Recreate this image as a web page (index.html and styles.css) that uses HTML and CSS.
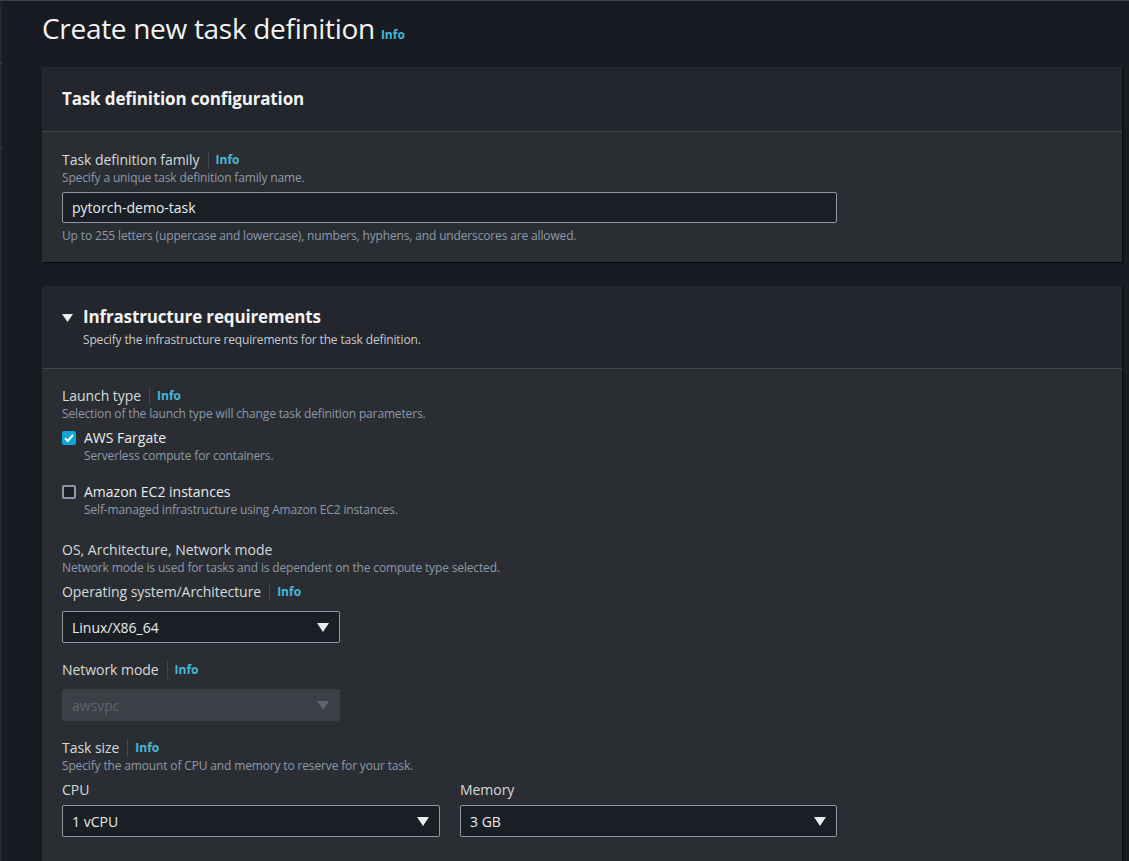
FILE: index.html
```html
<!DOCTYPE html>
<html lang="en">
<head>
<meta charset="utf-8">
<title>Create new task definition</title>
<link rel="stylesheet" href="styles.css">
</head>
<body>
<div class="side-strip"><span class="tick t1"></span><span class="tick t2"></span></div>
<main class="content">
  <h1 class="page-title">Create new task definition <a class="info info-title" href="#">Info</a></h1>

  <section class="panel">
    <header class="panel-header">
      <h2 class="panel-title">Task definition configuration</h2>
    </header>
    <div class="panel-body body-1">
      <div class="label-row"><span class="label">Task definition family</span><span class="sep"></span><a class="info" href="#">Info</a></div>
      <div class="desc">Specify a unique task definition family name.</div>
      <div class="input input-full">pytorch-demo-task</div>
      <div class="desc constraint">Up to 255 letters (uppercase and lowercase), numbers, hyphens, and underscores are allowed.</div>
    </div>
  </section>

  <section class="panel panel-2">
    <header class="panel-header header-2">
      <div class="exp-row">
        <svg class="caret" width="11" height="8" viewBox="0 0 11 8"><path d="M0 0 L11 0 L5.5 8 Z" fill="#eaeded"/></svg>
        <h2 class="panel-title">Infrastructure requirements</h2>
      </div>
      <div class="header-desc">Specify the infrastructure requirements for the task definition.</div>
    </header>
    <div class="panel-body body-2">
      <div class="label-row"><span class="label">Launch type</span><span class="sep"></span><a class="info" href="#">Info</a></div>
      <div class="desc">Selection of the launch type will change task definition parameters.</div>

      <div class="check-item first-check">
        <div class="check-row">
          <span class="box checked"><svg width="14" height="14" viewBox="0 0 14 14"><path d="M3 7.2 L5.8 10 L11 3.8" fill="none" stroke="#fff" stroke-width="2"/></svg></span>
          <span class="check-label">AWS Fargate</span>
        </div>
        <div class="desc indent">Serverless compute for containers.</div>
      </div>

      <div class="check-item second-check">
        <div class="check-row">
          <span class="box"></span>
          <span class="check-label">Amazon EC2 instances</span>
        </div>
        <div class="desc indent">Self-managed infrastructure using Amazon EC2 instances.</div>
      </div>

      <div class="group-title">OS, Architecture, Network mode</div>
      <div class="desc">Network mode is used for tasks and is dependent on the compute type selected.</div>

      <div class="label-row gap-6"><span class="label">Operating system/Architecture</span><span class="sep"></span><a class="info" href="#">Info</a></div>
      <div class="select w-277 mt-9"><span>Linux/X86_64</span><svg class="tri" width="12" height="9" viewBox="0 0 12 9"><path d="M0 0 L12 0 L6 9 Z" fill="#eaeded"/></svg></div>

      <div class="label-row gap-17"><span class="label">Network mode</span><span class="sep"></span><a class="info" href="#">Info</a></div>
      <div class="select disabled w-277 mt-9"><span>awsvpc</span><svg class="tri" width="12" height="9" viewBox="0 0 12 9"><path d="M0 0 L12 0 L6 9 Z" fill="#5f6670"/></svg></div>

      <div class="label-row gap-17"><span class="label">Task size</span><span class="sep"></span><a class="info" href="#">Info</a></div>
      <div class="desc">Specify the amount of CPU and memory to reserve for your task.</div>
      <div class="size-grid">
        <div class="field">
          <div class="label">CPU</div>
          <div class="select mt-5"><span>1 vCPU</span><svg class="tri" width="12" height="9" viewBox="0 0 12 9"><path d="M0 0 L12 0 L6 9 Z" fill="#eaeded"/></svg></div>
        </div>
        <div class="field">
          <div class="label">Memory</div>
          <div class="select mt-5"><span>3 GB</span><svg class="tri" width="12" height="9" viewBox="0 0 12 9"><path d="M0 0 L12 0 L6 9 Z" fill="#eaeded"/></svg></div>
        </div>
      </div>
    </div>
  </section>
</main>
</body>
</html>
```

FILE: styles.css
```css
* { box-sizing: border-box; }
html, body { margin: 0; padding: 0; }
body {
  background: #181b21;
  font-family: "Open Sans", "Noto Sans", sans-serif;
  color: #d5dbdb;
  border-top: 1px solid #3d424a;
  min-height: 861px;
  position: relative;
  overflow: hidden;
}
.side-strip {
  position: absolute;
  left: 0; top: 0; bottom: 0;
  width: 2px;
  background: #23262c;
}
.tick { position: absolute; left: 0; width: 2px; height: 1px; background: #3d424a; }
.t1 { top: 62px; }
.t2 { top: 147px; }

.content {
  padding: 0 7px 0 42px;
}
.page-title {
  margin: 0;
  padding-top: 9px;
  height: 66px;
  font-size: 28px;
  line-height: 36px;
  font-weight: 400;
  color: #f2f3f3;
  letter-spacing: -0.3px;
}
.info {
  color: #44b9d6;
  font-size: 12px;
  font-weight: 700;
  text-decoration: none;
  line-height: 16px;
  letter-spacing: 0;
}
.info-title { margin-left: -1px; }

.panel {
  background: #2a2e33;
  box-shadow: 1px 1px 1px rgba(0,0,0,0.55);
}
.panel-2 { margin-top: 24px; }
.panel-header {
  background: #23262c;
  border-bottom: 1px solid #414750;
  height: 65px;
  padding: 0 20px 1px;
  display: flex;
  align-items: center;
}
.panel-title {
  margin: 0;
  font-size: 17px;
  line-height: 22px;
  font-weight: 700;
  color: #f2f3f3;
  letter-spacing: -0.15px;
}
.header-2 {
  height: 83px;
  display: block;
  padding-top: 20px;
}
.exp-row { display: flex; align-items: center; gap: 10px; }
.caret { margin-top: 1px; }
.header-desc {
  margin-top: 4px;
  margin-left: 21px;
  font-size: 12px;
  line-height: 16px;
  color: #c5cbd1;
  letter-spacing: -0.15px;
}

.panel-body { padding: 0 20px; }
.body-1 { height: 130px; padding-top: 18px; }
.body-2 { padding-top: 17px; padding-bottom: 30px; }

.label-row { display: flex; align-items: center; height: 20px; }
.label { font-size: 14px; line-height: 20px; color: #d5dbdb; letter-spacing: -0.05px; }
.sep { width: 1px; height: 18px; background: #414750; margin: 0 7px 0 8px; }
.desc { font-size: 12px; line-height: 16px; color: #8d99a8; letter-spacing: -0.15px; }
.indent { padding-left: 22px; }
.constraint { margin-top: 5px; }

.input {
  margin-top: 6px;
  height: 31px;
  border: 1px solid #8d99a8;
  border-radius: 2px;
  background: #1a1e25;
  color: #eaeded;
  font-size: 14px;
  line-height: 29px;
  padding: 0 9px;
}
.input-full { width: 775px; }

.first-check { margin-top: 6px; }
.second-check { margin-top: 18px; }
.check-row { display: flex; align-items: center; height: 20px; gap: 8px; }
.box {
  width: 14px; height: 14px;
  border: 2px solid #8d99a8;
  border-radius: 2px;
  background: #1a1e25;
  display: inline-flex;
}
.box.checked { background: #0ea5d8; border-color: #0ea5d8; }
.box.checked svg { margin: -2px; }
.check-label { font-size: 14px; line-height: 20px; color: #eaeded; }

.group-title { margin-top: 22px; font-size: 14px; line-height: 20px; color: #d5dbdb; }
.gap-6 { margin-top: 6px; }
.gap-17 { margin-top: 17px; }
.mt-9 { margin-top: 9px; }
.mt-5 { margin-top: 5px; }

.select {
  height: 32px;
  border: 1px solid #8d99a8;
  border-radius: 2px;
  background: #1a1e25;
  color: #eaeded;
  font-size: 14px;
  padding: 0 10px 0 9px;
  display: flex;
  align-items: center;
  justify-content: space-between;
}
.select.disabled {
  background: #3b3f46;
  border-color: #3b3f46;
  color: #5f6670;
}
.w-277 { width: 278px; }

.size-grid {
  margin-top: 6px;
  display: grid;
  grid-template-columns: 378px 377px;
  gap: 20px;
}
```
